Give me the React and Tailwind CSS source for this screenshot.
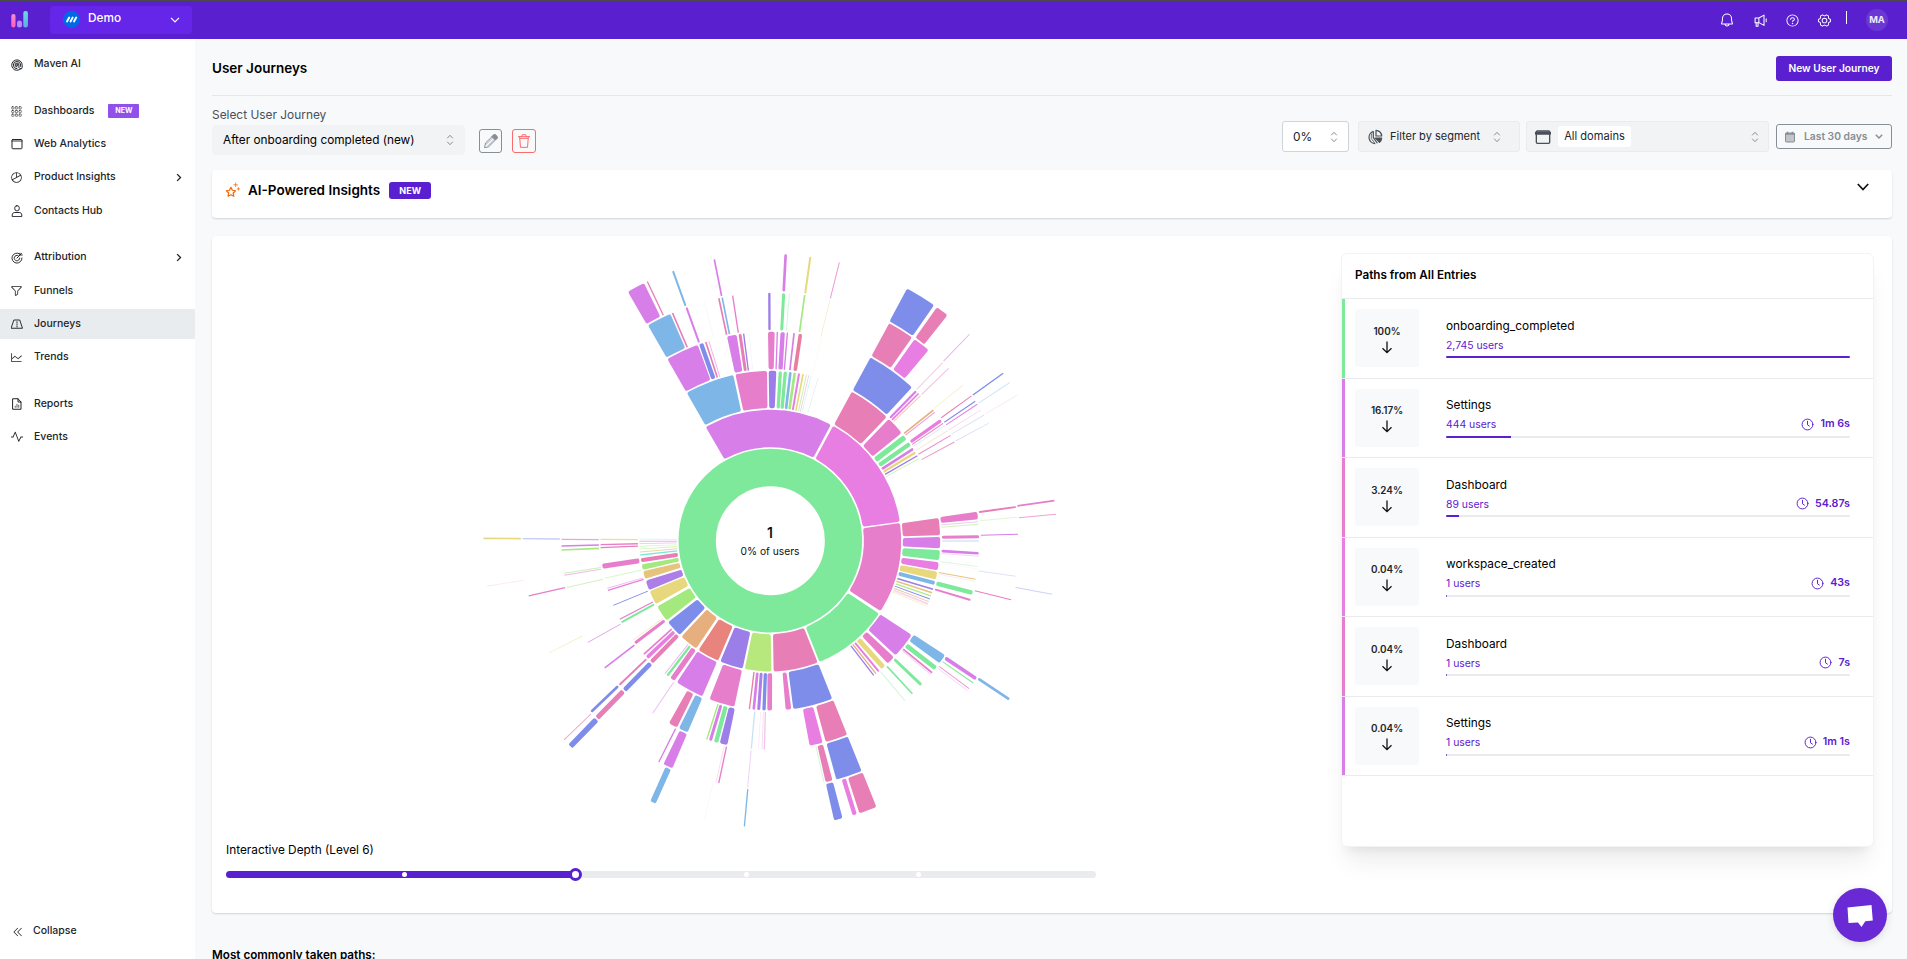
import React from "react";
import {
  PiBell, PiQuestion, PiGearSix, PiChartPie, PiFunnel,
  PiChartLine, PiPulse, PiCaretDoubleLeft,
} from "react-icons/pi";

const C = {
  green: "#7fe99b", purple: "#d87ee8", magenta: "#e87ee1", pink: "#e77ecb", rose: "#e87eb6",
  rosered: "#e77e9d", blue: "#7e8de9", sky: "#7eb6e7", violet: "#9b7ee8", grape: "#ae7ee8",
  yellow: "#e7d87e", gold: "#e7c47e", orange: "#e7ae7e", red: "#e8837e", lime: "#a3e97e",
  olive: "#b7e87e", teal: "#7ee8d8",
};

const CX = 901;
const CY = 902;
const inner = (ring) => 163.5 + 117 * ring;
const outer = (ring) => 275.5 + 117 * ring;

/* Wedges: ring, colour, then the two outer corners, clockwise. */
const WEDGES = [
  [1, "purple", 708, 562, 1083, 553], [1, "magenta", 1089, 558, 1288, 845],
  [1, "pink", 1290, 849, 1232, 1113], [1, "green", 1226, 1120, 1048, 1265],
  [1, "rose", 1044, 1270, 911, 1296], [1, "olive", 904, 1296, 824, 1288],
  [1, "violet", 818, 1286, 750, 1266], [1, "red", 744, 1263, 685, 1231],
  [1, "orange", 678, 1226, 634, 1190], [1, "blue", 629, 1185, 594, 1147],
  [1, "lime", 590, 1141, 561, 1100], [1, "yellow", 558, 1092, 541, 1053],
  [1, "grape", 538, 1050, 528, 1022], [1, "gold", 525, 1017, 519, 994],
  [1, "lime", 518, 990, 514, 973],
  [2, "sky", 650, 458, 790, 406], [2, "pink", 796, 402, 891, 394],
  [2, "violet", 896, 394, 919, 393], [2, "rose", 1145, 456, 1249, 532],
  [2, "pink", 1255, 538, 1293, 580], [2, "rose", 1405, 834, 1409, 886],
  [2, "purple", 1410, 891, 1410, 925], [2, "green", 1410, 930, 1408, 961],
  [2, "magenta", 1407, 967, 1404, 991], [2, "yellow", 1402, 995, 1398, 1019],
  [2, "purple", 1325, 1185, 1277, 1246], [2, "pink", 1271, 1251, 1254, 1271],
  [2, "blue", 1087, 1377, 970, 1407], [2, "pink", 964, 1408, 947, 1410],
  [2, "pink", 793, 1400, 718, 1379], [2, "purple", 697, 1368, 620, 1328],
  [3, "purple", 592, 357, 684, 317], [3, "purple", 771, 290, 800, 286],
  [3, "pink", 894, 277, 914, 277], [3, "blue", 1201, 353, 1325, 443],
  [3, "pink", 1522, 815, 1525, 838], [3, "sky", 1422, 1243, 1408, 1269],
  [3, "rose", 1131, 1483, 1067, 1505], [3, "magenta", 1058, 1508, 1019, 1517],
  [3, "violet", 772, 1515, 749, 1510], [3, "sky", 653, 1477, 626, 1467],
  [3, "rose", 621, 1462, 596, 1451],
  [4, "sky", 534, 256, 602, 224], [4, "rose", 1257, 251, 1325, 294],
  [4, "magenta", 1333, 299, 1375, 331], [4, "blue", 1174, 1591, 1099, 1619],
  [4, "rose", 1088, 1623, 1067, 1627], [4, "purple", 607, 1585, 580, 1573],
  [5, "purple", 474, 156, 522, 129], [5, "blue", 1311, 146, 1392, 196],
  [5, "rose", 1400, 203, 1431, 227], [5, "rose", 1219, 1700, 1168, 1719],
  [5, "blue", 1118, 1736, 1092, 1740],
];

/* Thin bars: ring, colour, outer end, thickness, opacity. */
const BARS = [
  [1, "rose", 512, 961, 12], [1, "teal", 510, 945, 4], [1, "gold", 510, 936, 3, 0.7],
  [1, "lime", 508, 927, 2, 0.7], [1, "olive", 508, 919, 2, 0.6], [1, "magenta", 508, 911, 2, 0.5],
  [1, "purple", 508, 904, 3, 0.6], [1, "teal", 507, 897, 3, 0.3],
  [2, "green", 931, 395, 10], [2, "green", 946, 396, 10], [2, "sky", 961, 398, 8],
  [2, "lime", 974, 400, 8], [2, "magenta", 987, 402, 6], [2, "yellow", 999, 404, 5],
  [2, "lime", 1009, 406, 3, 0.6], [2, "rose", 1016, 408, 2, 0.5], [2, "teal", 1023, 409, 2, 0.4],
  [2, "blue", 1043, 418, 2, 0.2], [2, "green", 1302, 594, 16], [2, "green", 1316, 614, 13],
  [2, "purple", 1327, 628, 8], [2, "yellow", 1335, 638, 7], [2, "violet", 1341, 648, 4],
  [2, "lime", 1346, 656, 2, 0.8],
  [2, "sky", 1394, 1029, 12], [2, "violet", 1390, 1048, 5], [2, "gold", 1386, 1058, 5],
  [2, "lime", 1383, 1068, 4, 0.9], [2, "blue", 1380, 1077, 3], [2, "orange", 1377, 1085, 3, 0.7],
  [2, "pink", 1375, 1091, 2, 0.5], [2, "rose", 1373, 1094, 2, 0.3], [2, "yellow", 1371, 1099, 2, 0.5],
  [2, "yellow", 1239, 1281, 15], [2, "magenta", 1226, 1294, 6], [2, "orange", 1218, 1301, 4],
  [2, "violet", 1211, 1306, 4], [2, "pink", 899, 1411, 14], [2, "blue", 882, 1411, 10],
  [2, "grape", 866, 1410, 9], [2, "purple", 851, 1410, 8], [2, "rosered", 838, 1409, 4],
  [2, "pink", 607, 1318, 15], [2, "green", 592, 1307, 7], [2, "purple", 584, 1302, 3, 0.6],
  [2, "rose", 546, 1264, 13], [2, "magenta", 532, 1252, 11], [2, "pink", 522, 1242, 5],
  [2, "pink", 495, 1209, 9], [2, "yellow", 488, 1201, 2, 0.5], [2, "green", 454, 1147, 6],
  [2, "pink", 449, 1138, 4], [2, "blue", 430, 1096, 3], [2, "magenta", 414, 1051, 4],
  [2, "pink", 412, 1045, 3, 0.5], [2, "lime", 404, 1015, 3, 0.4], [2, "pink", 397, 979, 15],
  [2, "rose", 391, 923, 4], [2, "pink", 390, 914, 4], [2, "yellow", 390, 898, 4, 0.8],
  [3, "blue", 694, 313, 13], [3, "rose", 708, 308, 5], [3, "magenta", 717, 305, 3, 0.6],
  [3, "rose", 810, 283, 9], [3, "violet", 821, 282, 4], [3, "violet", 837, 281, 2, 0.1],
  [3, "purple", 922, 277, 4], [3, "purple", 938, 279, 13], [3, "purple", 952, 280, 4],
  [3, "purple", 972, 282, 5], [3, "rosered", 991, 284, 11], [3, "yellow", 1055, 293, 2, 0.15],
  [3, "purple", 1336, 456, 7], [3, "magenta", 1343, 463, 5], [3, "orange", 1349, 469, 3, 0.7],
  [3, "orange", 1388, 512, 5], [3, "pink", 1394, 517, 3, 0.8], [3, "magenta", 1411, 543, 10],
  [3, "rose", 1418, 551, 3], [3, "sky", 1423, 558, 2, 0.4], [3, "orange", 1430, 574, 2, 0.4],
  [3, "pink", 1441, 587, 3, 0.9], [3, "rose", 1451, 607, 3, 0.8],
  [3, "purple", 1524, 845, 3, 0.4], [3, "lime", 1524, 853, 3, 0.5], [3, "pink", 1527, 890, 9],
  [3, "sky", 1527, 903, 6, 0.25], [3, "purple", 1527, 940, 8], [3, "magenta", 1524, 949, 3, 0.3],
  [3, "green", 1521, 979, 3, 0.3], [3, "pink", 1520, 986, 2, 0.1], [3, "gold", 1517, 1018, 3],
  [3, "rose", 1514, 1024, 2, 0.2], [3, "green", 1507, 1058, 13], [3, "pink", 1502, 1080, 6],
  [3, "green", 1396, 1284, 14], [3, "pink", 1386, 1298, 5], [3, "purple", 1382, 1303, 2, 0.5],
  [3, "green", 1354, 1335, 9], [3, "green", 1327, 1361, 5], [3, "green", 1304, 1381, 3, 0.4],
  [3, "sky", 844, 1526, 4, 0.4], [3, "pink", 866, 1517, 2, 0.2], [3, "purple", 876, 1528, 3, 0.25],
  [3, "pink", 883, 1528, 4, 0.45], [3, "green", 738, 1507, 13], [3, "purple", 721, 1502, 9],
  [3, "lime", 710, 1499, 4], [3, "purple", 547, 1421, 3, 0.5], [3, "blue", 465, 1349, 14],
  [3, "rose", 447, 1336, 6], [3, "purple", 404, 1284, 5], [3, "purple", 352, 1208, 3, 0.7],
  [3, "lime", 289, 1043, 3, 0.5], [3, "lime", 282, 1000, 3, 0.6], [3, "pink", 283, 1006, 3, 0.6],
  [3, "lime", 273, 930, 5], [3, "purple", 273, 918, 4], [3, "pink", 273, 898, 4, 0.7],
  [4, "rose", 608, 220, 5], [4, "purple", 650, 204, 6], [4, "rose", 747, 177, 5],
  [4, "sky", 757, 175, 5], [4, "pink", 788, 168, 4], [4, "purple", 702, 185, 2, 0.1],
  [4, "violet", 898, 159, 7], [4, "green", 941, 161, 9], [4, "green", 958, 162, 3, 0.35],
  [4, "lime", 1004, 166, 5], [4, "yellow", 1080, 180, 2, 0.5], [4, "pink", 1416, 370, 3, 0.4],
  [4, "pink", 1433, 388, 3, 0.5], [4, "yellow", 1478, 436, 2, 0.5], [4, "rose", 1503, 469, 3],
  [4, "blue", 1514, 485, 3], [4, "magenta", 1520, 494, 3], [4, "pink", 1531, 511, 2, 0.35],
  [4, "blue", 1541, 526, 2, 0.35], [4, "blue", 1555, 550, 2, 0.35], [4, "rose", 1637, 801, 6],
  [4, "lime", 1641, 832, 3, 0.35], [4, "purple", 1644, 883, 3], [4, "blue", 1638, 1009, 3, 0.25],
  [4, "pink", 1623, 1079, 3], [4, "purple", 1518, 1316, 11], [4, "green", 1508, 1328, 3],
  [4, "pink", 1497, 1346, 3, 0.8], [4, "magenta", 1492, 1352, 2, 0.4], [4, "green", 1062, 1627, 3, 0.35],
  [4, "purple", 833, 1643, 3, 0.35], [4, "pink", 746, 1630, 4], [4, "pink", 738, 1628, 3, 0.25],
  [4, "purple", 566, 1567, 4], [4, "rose", 383, 1432, 15], [4, "blue", 363, 1416, 8],
  [4, "yellow", 238, 1238, 2, 0.5], [4, "pink", 175, 1068, 4], [4, "blue", 156, 896, 4, 0.45],
  [5, "rose", 532, 125, 4], [5, "sky", 609, 93, 6], [5, "purple", 733, 58, 5],
  [5, "purple", 947, 43, 8], [5, "yellow", 1021, 51, 6], [5, "pink", 1108, 67, 3, 0.8],
  [5, "blue", 1599, 400, 4], [5, "sky", 1620, 427, 3, 0.4], [5, "purple", 1499, 282, 3, 0.6],
  [5, "pink", 1642, 465, 2, 0.25], [5, "pink", 1752, 782, 5], [5, "pink", 1757, 823, 3, 0.7],
  [5, "blue", 1746, 1063, 3, 0.4], [5, "sky", 1618, 1378, 8], [5, "magenta", 1154, 1724, 13],
  [5, "sky", 823, 1760, 4], [5, "pink", 704, 1735, 2, 0.1], [5, "sky", 549, 1687, 18],
  [5, "blue", 303, 1517, 17], [5, "rose", 281, 1501, 3, 0.7], [5, "pink", 49, 1039, 2, 0.25],
  [5, "yellow", 39, 895, 5],
];

const CORNER = 6;
const angleOf = (x, y) => Math.atan2(y - CY, x - CX);
const point = (r, a) => `${(CX + r * Math.cos(a)).toFixed(1)} ${(CY + r * Math.sin(a)).toFixed(1)}`;

function wedgePath(ring, x0, y0, x1, y1) {
  const start = angleOf(x0, y0);
  let end = angleOf(x1, y1);
  if (end < start) end += Math.PI * 2;
  const ri = inner(ring) + CORNER;
  const ro = outer(ring) - CORNER;
  const gap = 3;
  const base = gap / outer(ring);
  const insetOut = (gap + CORNER) / ro - base;
  const insetIn = (gap + CORNER) / ri - base;
  return `M${point(ri, start + insetIn)} L${point(ro, start + insetOut)} A${ro} ${ro} 0 0 1 ${point(ro, end - insetOut)} L${point(ri, end - insetIn)} A${ri} ${ri} 0 0 0 ${point(ri, start + insetIn)}Z`;
}

function Sunburst() {
  return (
    <svg className="ml-[244px] mt-1 block size-[600px] shrink-0" viewBox="0 0 1800 1800">
      <circle cx={CX} cy={CY} r="219.5" fill="none" stroke={C.green} strokeWidth="112" />
      {WEDGES.map(([ring, color, ...corners], i) => (
        <path key={i} d={wedgePath(ring, ...corners)} fill={C[color]} stroke={C[color]} strokeWidth={CORNER * 2} strokeLinejoin="round" />
      ))}
      {BARS.map(([ring, color, x, y, w, opacity = 1], i) => {
        const a = angleOf(x, y);
        const cap = w > 5 ? Math.min(w / 2, 5) : 0;
        const deg = (a * 180) / Math.PI;
        return (
          <rect key={i} x={inner(ring)} y={-w / 2} width={112} height={w} rx={cap} fill={C[color]} opacity={opacity}
            transform={`translate(${CX} ${CY}) rotate(${deg.toFixed(2)})`} />
        );
      })}
      <text x="900" y="893" textAnchor="middle" fontSize="42" fontWeight="600" fill="#111">1</text>
      <text x="900" y="946" textAnchor="middle" fontSize="30.8" fill="#111">0% of users</text>
    </svg>
  );
}

function Icon({ children, className = "size-3", sw = 1.6 }) {
  return (
    <svg viewBox="0 0 24 24" fill="none" stroke="currentColor" strokeWidth={sw} strokeLinecap="round" strokeLinejoin="round" className={className}>
      {children}
    </svg>
  );
}

const Spiral = () => (
  <Icon sw={2}>
    <path d="M20 19a10.5 10.5 0 1 1 2.400-6v4a3 3 0 0 1-5.500 1.500" />
    <path d="M12 19.500A7.300 7.300 0 1 1 19.300 12v3" />
    <path d="M12 15.800A3.800 3.800 0 1 1 15.800 12v5" />
    <circle cx="12" cy="12" r="1" />
  </Icon>
);
const DotGrid = () => (
  <Icon className="size-[11px]" sw={1.3}>
    {[4, 12, 20].map((y) => [4, 12, 20].map((x) => <rect key={`${x}-${y}`} x={x - 2.5} y={y - 2.5} width="5" height="5" rx="1.500" />))}
  </Icon>
);
const Browser = ({ className = "size-3", bold }) => (
  <Icon className={className} sw={2}>
    <rect x="2" y="3" width="20" height="18.500" rx="1.500" />
    <path d="M2 6.200h20" strokeWidth={bold ? 5 : 3} opacity={bold ? 1 : 0.6} />
  </Icon>
);
const Target = () => (
  <Icon sw={1.900}>
    <path d="M17 3.500A10 10 0 1 0 22 12" />
    <path d="M14.500 7.200A5.500 5.500 0 1 0 17.500 12" />
    <path d="M12 12l6-6V2.500M18 6h4.500M18 6l3-3" />
  </Icon>
);
const Road = () => (
  <Icon sw={1.900}>
    <path d="M6.500 4h11L23 20.500H1z" />
    <path d="M12 7.500v2M12 12v2M12 16.500v1.500" />
  </Icon>
);
const Report = () => (
  <Icon sw={2}>
    <path d="M4 1.500h10L20 8v14.500H4z" />
    <path d="M14 1.500V8h6" />
    <path d="M8.500 18.500v-2M12 18.500v-6M15.500 18.500v-4" strokeWidth="1.500" />
  </Icon>
);
const Person = () => (
  <Icon sw={2}>
    <rect x="7.500" y="1.500" width="9" height="10" rx="4" />
    <path d="M2.500 22.500v-3c0-3 2.500-4.500 5-4.500h9c2.500 0 5 1.500 5 4.500v3z" />
  </Icon>
);
const Stars = () => (
  <Icon className="size-[15px] text-[#f76707]" sw={2}>
    <path d="M9.500 8.500l2.300 4.700 5 .8-3.600 3.600.8 5.100-4.500-2.400L5 22.700l.8-5.100L2.200 14l5-.8z" />
    <path d="M17 1.500v6M14 4.500h6M21.500 9v4M19.500 11h4" strokeWidth="1.600" opacity=".75" />
  </Icon>
);
const Trash = () => (
  <Icon className="size-4" sw={1.500}>
    <path d="M3.500 5.500h17M8.500 5.500l1-3h5l1 3M5.500 5.500l1.200 16h10.600l1.200-16M6 8h12" />
  </Icon>
);
const Pencil = () => (
  <Icon className="size-4" sw={1.500}>
    <path d="M2.500 21.500l1.300-6.500L16 3a2 2 0 0 1 2.800 0L21 5.200A2 2 0 0 1 21 8L9 20.200z" />
    <path d="M13.500 5.500l5 5 2.500-2.500a2 2 0 0 0 0-2.800L18.800 3A2 2 0 0 0 16 3z" fill="currentColor" />
    <path d="M5 16.500L15 7M7.500 19L17 9.500" strokeWidth="1" />
  </Icon>
);
const Megaphone = () => (
  <Icon className="ml-[19px] size-[13px]" sw={1.900}>
    <path d="M2 7.500h7v8.500H2zM9 7.500L18.500 2v19L9 16" />
    <path d="M4 16v6.500h3.500V16M22.500 9v5.500" />
  </Icon>
);
const Selector = ({ className = "" }) => (
  <svg viewBox="0 0 8 12" fill="none" stroke="#868e96" strokeLinecap="round" strokeLinejoin="round" className={`h-3 w-2 ${className}`}>
    <path d="M1.500 4L4 1.300 6.500 4M1.500 8L4 10.700 6.500 8" />
  </svg>
);

function NavItem({ icon, label, badge, arrow, active, last }) {
  return (
    <div className={`flex h-[30px] shrink-0 items-center pl-[11px] pr-3 ${active ? "bg-[#e9ecef]" : ""} ${last ? "mb-[16.6px]" : "mb-[3.300px]"}`}>
      <span className="-ml-px flex w-[13px] shrink-0 justify-center">{icon}</span>
      <span className="-mt-px ml-[11px] text-[10.500px] font-medium whitespace-nowrap">{label}</span>
      {badge && <span className="ml-3.5 flex h-3.5 w-[31px] items-center justify-center rounded-[1px] bg-[#9050e9] text-[7.200px] font-bold text-white">NEW</span>}
      {arrow && <svg viewBox="0 0 8 12" className="-mt-px ml-auto mr-px h-[9px] w-1.5" fill="none" stroke="currentColor" strokeWidth="1.800"><path d="M1.500 1.500L6 6l-4.500 4.500" /></svg>}
    </div>
  );
}

function Sidebar() {
  return (
    <aside className="flex w-[195px] shrink-0 flex-col bg-white pt-[10.600px] text-[#212529]">
      <NavItem icon={<Spiral />} label="Maven AI" last />
      <NavItem icon={<DotGrid />} label="Dashboards" badge />
      <NavItem icon={<Browser />} label="Web Analytics" />
      <NavItem icon={<PiChartPie className="size-[13px] shrink-0" />} label="Product Insights" arrow />
      <NavItem icon={<Person />} label="Contacts Hub" last />
      <NavItem icon={<Target />} label="Attribution" arrow />
      <NavItem icon={<PiFunnel className="size-[13px] shrink-0" />} label="Funnels" />
      <NavItem icon={<Road />} label="Journeys" active />
      <NavItem icon={<PiChartLine className="size-[13px] shrink-0" />} label="Trends" last />
      <NavItem icon={<Report />} label="Reports" />
      <NavItem icon={<PiPulse className="size-[14px] shrink-0" />} label="Events" />
      <div className="mt-auto mb-4 flex h-6 items-center pl-3">
        <PiCaretDoubleLeft className="mt-0.5 size-3" />
        <span className="ml-[9px] text-[10.500px] font-medium">Collapse</span>
      </div>
    </aside>
  );
}

function Header() {
  return (
    <header className="flex h-[39px] shrink-0 items-center border-t border-[#4a4a4a] bg-[#5a1fcf] text-white">
      <svg className="ml-[11px] h-[18px] w-[18px]" viewBox="0 0 18 18">
        <defs>
          <linearGradient id="barPink" x1="0" y1="0" x2="0" y2="1"><stop stopColor="#f48fd0" /><stop offset="1" stopColor="#ff5cb8" /></linearGradient>
          <linearGradient id="barTeal" x1="0" y1="0" x2="0" y2="1"><stop stopColor="#63e0dc" /><stop offset="1" stopColor="#63a9e8" /></linearGradient>
        </defs>
        <rect x=".3" y="3" width="4.200" height="13.500" rx="2" fill="url(#barPink)" />
        <rect x="6" y="9.500" width="5" height="7" rx="2.500" fill="#b28cf5" />
        <rect x="12.300" y="0" width="4.600" height="16.500" rx="2" fill="url(#barTeal)" />
      </svg>
      <div className="-mt-px ml-[21px] flex h-7 w-[142px] items-center rounded bg-[#6526ea] pl-[13px] pr-3">
        <svg viewBox="0 0 17 17" className="size-[17px]">
          <circle cx="8.500" cy="8.500" r="8.500" fill="#0069e6" />
          <path d="M4 10.500L6.200 6.500M7.500 10.500L9.700 6.500M11 10.500l2.200-4" stroke="#fff" strokeWidth="1.900" strokeLinecap="round" />
        </svg>
        <span className="-mt-0.5 ml-2 text-[11.800px] font-medium">Demo</span>
        <svg viewBox="0 0 10 6" className="ml-auto h-1.5 w-2.5" fill="none" stroke="currentColor" strokeWidth="1.200"><path d="M1 .8l4 4 4-4" /></svg>
      </div>
      <div className="ml-auto flex items-center pr-[19px]">
        <PiBell className="size-[16px]" />
        <Megaphone />
        <PiQuestion className="ml-[18px] size-[15px]" />
        <PiGearSix className="ml-[17px] size-[15px]" />
        <span className="ml-[14px] mb-[5px] h-[13px] w-px bg-white" />
        <span className="ml-[19px] flex size-[22px] items-center justify-center rounded-full bg-[#6b38d4] text-[9.300px] font-bold text-white/90">MA</span>
      </div>
    </header>
  );
}

function Controls() {
  return (
    <div className="flex h-[60px] items-start pt-2">
      <div className="w-[253px]">
        <div className="mt-px h-5 text-[11.900px] leading-5 text-[#495057]">Select User Journey</div>
        <div className="flex h-[30px] items-center rounded bg-[#f1f3f5] pl-[11px] pr-[11px] text-[11.800px]">
          <span className="pt-px">After onboarding completed (new)</span><Selector className="ml-auto" />
        </div>
      </div>
      <div className="ml-3.5 mt-[25px] flex gap-2.5">
        <div className="flex h-6 w-[23px] items-center justify-center rounded-[3px] border border-[#868e96] text-[#868e96]"><Pencil /></div>
        <div className="flex size-6 items-center justify-center rounded-[3px] border border-[#fa6b6b] text-[#fa6b6b]"><Trash /></div>
      </div>
      <div className="ml-auto mt-[17px] flex h-[31px] items-center text-[#212529]">
        <div className="flex h-full w-[67px] items-center rounded-[3px] border border-[#ced4da] bg-white pl-2.5 pr-2.5 text-[11.900px]">0%<Selector className="ml-auto" /></div>
        <div className="ml-[9px] flex h-full w-[162px] items-center rounded-[3px] border border-[#e9ecef] bg-[#f1f3f5] pl-2 pr-[18px] text-[11px]">
          <svg viewBox="0 0 24 24" className="size-4 text-[#495057]" fill="none" stroke="currentColor" strokeWidth="1.800" strokeLinejoin="round">
            <path d="M13.500 2v8.500H22A8.600 8.600 0 0 0 13.500 2z" />
            <path d="M9.500 3.500a9.500 9.500 0 0 0 3 18.500M9.500 3.500V13l6 8.400" />
            <path d="M6.500 6.500v8l5 6.500" strokeWidth="1.200" />
            <path d="M12.500 13.500H22a9 9 0 0 1-3.200 6.500z" fill="currentColor" />
          </svg>
          <span className="ml-[7px] whitespace-nowrap">Filter by segment</span><Selector className="ml-auto" />
        </div>
        <div className="ml-1.5 flex h-full w-[243px] items-center rounded-[3px] border border-[#e9ecef] bg-[#f1f3f5] pl-2 pr-[9px] text-[11.100px]">
          <span className="text-[#495057]"><Browser className="size-4" bold /></span>
          <span className="ml-[7px] flex h-[21px] w-[73px] items-center justify-center rounded-[3px] bg-white">All domains</span>
          <Selector className="ml-auto" />
        </div>
        <div className="ml-[7px] flex h-[25px] w-[116px] items-center rounded-[3px] border border-[#868e96] pl-[7px] pr-2 text-[10.300px] font-semibold text-[#868e96]">
          <svg viewBox="0 0 12 12" className="size-3"><rect x="1.500" y="2" width="9" height="9" rx="1" fill="#c1c5ca" stroke="#868e96" /><path d="M1 3h10M3.500.8v2M8.500.8v2" stroke="#868e96" strokeWidth="1.600" /></svg>
          <span className="ml-2 whitespace-nowrap">Last 30 days</span>
          <svg viewBox="0 0 10 6" className="ml-auto h-[5px] w-2" fill="none" stroke="currentColor" strokeWidth="1.800"><path d="M1 .8l4 4 4-4" /></svg>
        </div>
      </div>
    </div>
  );
}

const PATHS = [
  { pct: "100%", name: "onboarding_completed", users: "2,745", fill: 100, color: C.green },
  { pct: "16.17%", name: "Settings", users: "444", time: "1m 6s", fill: 16.17, color: C.purple },
  { pct: "3.24%", name: "Dashboard", users: "89", time: "54.87s", fill: 3.24, color: C.pink },
  { pct: "0.04%", name: "workspace_created", users: "1", time: "43s", fill: 0.1, color: C.magenta },
  { pct: "0.04%", name: "Dashboard", users: "1", time: "7s", fill: 0.1, color: C.pink },
  { pct: "0.04%", name: "Settings", users: "1", time: "1m 1s", fill: 0.1, color: C.purple },
];

function PathRow({ pct, name, users, time, fill, color }) {
  return (
    <div className="flex h-[79.500px] border-b border-[#e9ecef]">
      <span className="w-[3px] shrink-0" style={{ backgroundColor: color }} />
      <div className="ml-2.5 mt-2.5 flex h-[58px] w-16 flex-col items-center rounded-[3px] bg-[#f8f9fa] pt-[13.500px]">
        <span className="text-[9.900px] leading-4 font-semibold text-[#212529]">{pct}</span>
        <svg viewBox="0 0 12 13" className="mt-0.5 h-[13px] w-3" fill="none" stroke="#111" strokeWidth="1.300"><path d="M6 .5v11M1.500 7.200L6 11.700l4.500-4.500" /></svg>
      </div>
      <div className="ml-[27px] mr-[23px] flex-1 pt-[16.500px]">
        <div className="h-[20.500px] text-[11.850px] leading-5 text-black">{name}</div>
        <div className="flex h-[19.500px] items-center justify-between text-[#5c20d0]">
          <span className="text-[10.400px]">{users} users</span>
          {time && (
            <span className="-mt-0.5 flex items-center gap-[6px] text-[10.700px] font-semibold">
              <Icon className="size-[13px]" sw={1.800}><circle cx="12" cy="12" r="10" /><path d="M12 6v6.500l3.500 2.500" /></Icon>{time}
            </span>
          )}
        </div>
        <div className="mt-[.5px] h-[2.400px] overflow-hidden rounded-full bg-[#e9ecef]">
          <div className="h-full min-w-px bg-[#5c20d0]" style={{ width: `${fill}%` }} />
        </div>
      </div>
    </div>
  );
}

function DepthSlider() {
  return (
    <div className="mt-[11px] flex h-[7px] w-[870px] shrink-0 items-center">
      <div className="flex h-full w-[349px] items-center rounded-l-full bg-[#5a1fcf] pl-44"><span className="size-[5px] rounded-full bg-white" /></div>
      <div className="relative flex h-full flex-1 items-center rounded-r-full bg-[#e9ebee]">
        <span className="absolute -left-1.5 size-[13px] rounded-full border-[3px] border-[#5a1fcf] bg-white" />
        <span className="ml-[169px] size-[5px] rounded-full bg-white" />
        <span className="ml-[167px] size-[5px] rounded-full bg-white" />
      </div>
    </div>
  );
}

export default function App() {
  return (
    <div className="relative flex h-[959px] w-[1907px] flex-col overflow-hidden bg-[#f8f9fb] font-['Inter',sans-serif] text-black">
      <Header />
      <div className="flex min-h-0 flex-1">
        <Sidebar />
        <main className="min-w-0 flex-1 overflow-hidden pl-[17px] pr-[15px]">
          <div className="flex h-[57px] items-center justify-between border-b border-[#e5e8eb] pt-0.5">
            <h1 className="text-[13.500px] font-semibold">User Journeys</h1>
            <button className="mt-px flex h-[25px] w-[116px] items-center justify-center rounded-[3px] bg-[#5a1fcf] text-[10.200px] font-semibold whitespace-nowrap text-white">New User Journey</button>
          </div>
          <Controls />
          <section className="mt-3.5 flex h-[48px] items-start rounded bg-white pl-[13px] pr-[23px] pt-3 shadow-[0_1px_2px_rgba(0,0,0,0.15)]">
            <Stars />
            <h2 className="-mt-0.5 ml-2 text-[13.500px] leading-[20px] font-semibold">AI-Powered Insights</h2>
            <span className="ml-[9px] flex h-[17px] w-[42px] items-center justify-center rounded-[3px] bg-[#5a1fcf] text-[9px] font-bold text-white">NEW</span>
            <svg viewBox="0 0 12 8" className="ml-auto mt-px h-2 w-3" fill="none" stroke="#111" strokeWidth="1.700"><path d="M.8 1L6 6.500 11.200 1" /></svg>
          </section>
          <section className="mt-[18px] flex h-[677px] justify-between rounded bg-white pl-3.5 pr-[18px] shadow-[0_1px_2px_rgba(0,0,0,0.15)]">
            <div className="flex w-[900px] flex-col">
              <Sunburst />
              <div className="text-[11.850px] leading-5">Interactive Depth (Level 6)</div>
              <DepthSlider />
            </div>
            <div className="mt-[17px] h-[594px] w-[533px] rounded-md border border-[#f1f3f5] bg-white shadow-[0_20px_25px_-5px_rgba(0,0,0,0.07),0_8px_10px_-6px_rgba(0,0,0,0.08)]">
              <div className="flex h-[45px] items-center border-b border-[#e9ecef] pl-[13px] pb-px text-[11.700px] font-semibold">Paths from All Entries</div>
              {PATHS.map((p, i) => <PathRow key={i} {...p} />)}
            </div>
          </section>
          <h3 className="mt-8 text-[11.700px] leading-5 font-semibold">Most commonly taken paths:</h3>
        </main>
      </div>
      <div className="absolute bottom-[17px] left-[1833px] flex size-[54px] items-center justify-center rounded-full bg-[#692ad5] shadow-[0_2px_8px_rgba(0,0,0,0.12)]">
        <svg viewBox="0 0 26 24" className="mt-px h-6 w-[26px]" fill="#fff"><path d="M.5 3.500L24.500 1l1.300 15.500-7.500.7L14.500 23l-3.500-4.600-9.500.6z" /></svg>
      </div>
    </div>
  );
}
